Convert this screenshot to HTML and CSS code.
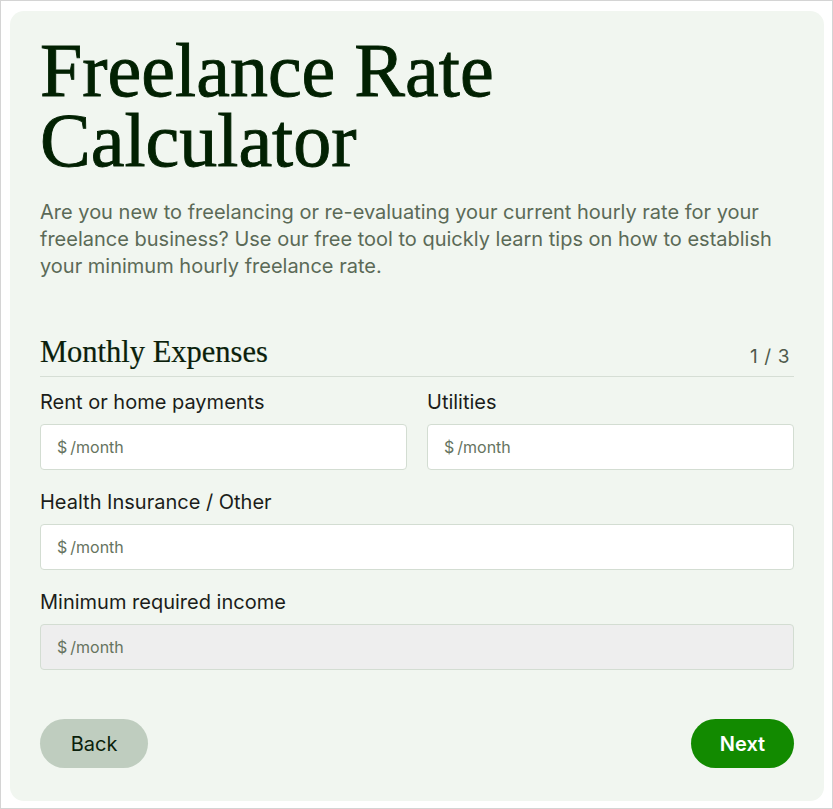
FILE: index.html
```html
<!DOCTYPE html>
<html lang="en">
<head>
<meta charset="utf-8">
<title>Freelance Rate Calculator</title>
<link rel="stylesheet" href="styles.css">
</head>
<body>
<div class="frame">
  <main class="card">
    <h1 class="title"><span class="title-line">Freelance Rate</span><span class="title-line">Calculator</span></h1>
    <p class="intro">Are you new to freelancing or re-evaluating your current hourly rate for your freelance business? Use our free tool to quickly learn tips on how to establish your minimum hourly freelance rate.</p>

    <section class="step">
      <header class="step-head">
        <h2 class="step-title">Monthly Expenses</h2>
        <span class="step-count">1 / 3</span>
      </header>

      <div class="row two">
        <label class="field">
          <span class="label">Rent or home payments</span>
          <span class="input"><span class="ph"><span class="cur">$</span>/month</span></span>
        </label>
        <label class="field">
          <span class="label">Utilities</span>
          <span class="input"><span class="ph"><span class="cur">$</span>/month</span></span>
        </label>
      </div>

      <div class="row">
        <label class="field">
          <span class="label">Health Insurance / Other</span>
          <span class="input"><span class="ph"><span class="cur">$</span>/month</span></span>
        </label>
      </div>

      <div class="row">
        <label class="field">
          <span class="label">Minimum required income</span>
          <span class="input disabled"><span class="ph"><span class="cur">$</span>/month</span></span>
        </label>
      </div>
    </section>

    <div class="actions">
      <button class="btn back" type="button">Back</button>
      <button class="btn next" type="button">Next</button>
    </div>
  </main>
</div>
</body>
</html>
```

FILE: styles.css
```css
* { box-sizing: border-box; }
html, body { margin: 0; padding: 0; background: #fff; }
.frame {
  width: 833px;
  height: 809px;
  border: 1px solid #d4d4d4;
  padding: 10px 8px 7px 9px;
}
.card {
  height: 100%;
  background: #f1f6f0;
  border-radius: 14px;
  padding: 24px 30px 33px 30px;
  display: flex;
  flex-direction: column;
}
.title {
  margin: 0;
  font-family: "Liberation Serif", serif;
  font-weight: normal;
  font-size: 76px;
  line-height: 70px;
  color: #022102;
  -webkit-text-stroke: 0.9px #022102;
}
.title-line { display: block; }
.intro {
  margin: 24px 0 0 0;
  font-family: "Inter", "Liberation Sans", sans-serif;
  font-size: 20px;
  line-height: 27px;
  color: #5b6a57;
}
.step { margin-top: 52px; }
.step-head {
  display: flex;
  justify-content: space-between;
  align-items: flex-end;
  border-bottom: 1px solid #d6ded5;
  padding-bottom: 6px;
}
.step-title {
  margin: 0;
  font-family: "Liberation Serif", serif;
  font-weight: normal;
  font-size: 30.5px;
  line-height: 36px;
  margin-top: 2px;
  color: #0b1f0b;
  -webkit-text-stroke: 0.2px #0b1f0b;
}
.step-count {
  font-family: "Inter", "Liberation Sans", sans-serif;
  font-size: 19px;
  letter-spacing: 0.6px;
  color: #4f5a4c;
  line-height: 24px;
  padding-right: 4px;
  margin-bottom: 1px;
}
.row { margin-top: 13px; display: grid; grid-template-columns: 1fr; }
.row.two { grid-template-columns: 1fr 1fr; column-gap: 20px; }
.row + .row { margin-top: 20px; }
.field { display: flex; flex-direction: column; }
.label {
  font-family: "Inter", "Liberation Sans", sans-serif;
  font-size: 20px;
  line-height: 24px;
  color: #1b1d1a;
  margin-bottom: 10px;
}
.input {
  height: 46px;
  background: #fff;
  border: 1px solid #d3ddd2;
  border-radius: 4px;
  display: flex;
  align-items: center;
  padding: 0 16px;
}
.input.disabled { background: #eeeeee; }
.ph {
  font-family: "Inter", "Liberation Sans", sans-serif;
  font-size: 16px;
  color: #66745f;
}
.cur { margin-right: 3px; }
.actions {
  margin-top: auto;
  display: flex;
  justify-content: space-between;
}
.btn {
  border: none;
  border-radius: 25px;
  height: 49px;
  font-family: "Inter", "Liberation Sans", sans-serif;
  font-size: 20px;
  cursor: pointer;
}
.back { width: 108px; background: #bfcdbf; color: #0b1f0b; }
.next { width: 103px; background: #128a00; color: #fff; font-weight: 600; }
```
